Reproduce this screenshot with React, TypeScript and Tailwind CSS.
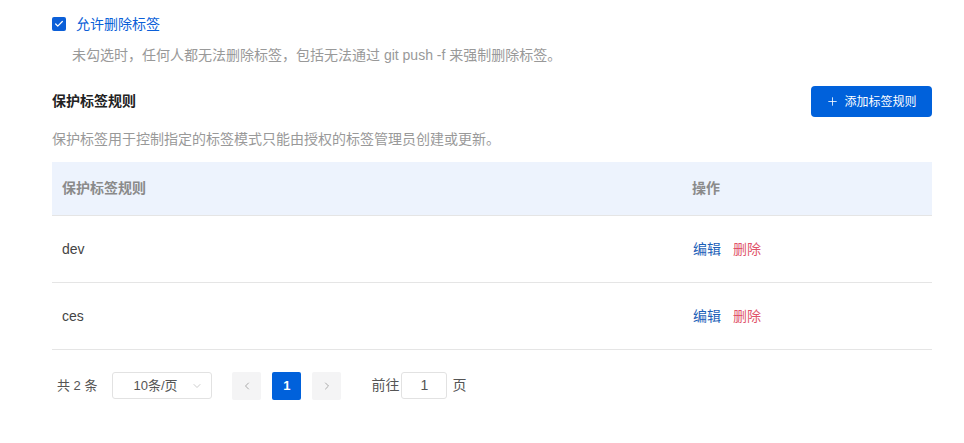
import { Check, ChevronDown, ChevronLeft, ChevronRight, Plus } from "lucide-react";

const rules = ["dev", "ces"];

export default function App() {
  return (
    <div
      className="min-h-screen bg-white pl-[52px] pr-[32px] pt-[17px] text-[14px] text-[#333]"
      style={{ fontFamily: '"Liberation Sans", Arial, "Noto Sans CJK SC", sans-serif' }}
    >
      <label className="flex items-center gap-[10px] h-[14px]">
        <span className="flex h-[14px] w-[14px] items-center justify-center rounded-[2px] bg-[#0b5fd8]">
          <Check className="h-[10px] w-[10px] text-white" strokeWidth={3} />
        </span>
        <span className="text-[14px] text-[#0b5fd8] leading-none">允许删除标签</span>
      </label>
      <p className="mt-[14px] pl-[20px] text-[14px] leading-[20px] text-[#999]">
        未勾选时，任何人都无法删除标签，包括无法通过 git push -f 来强制删除标签。
      </p>

      <div className="mt-[21px] flex items-center justify-between">
        <h2 className="text-[14px] font-bold text-[#222]">保护标签规则</h2>
        <button className="flex h-[31px] w-[121px] items-center justify-center gap-[5px] rounded-[4px] bg-[#0061db] text-[12px] text-white">
          <Plus className="h-[13px] w-[13px]" strokeWidth={1.5} />
          添加标签规则
        </button>
      </div>
      <p className="mt-[12px] text-[14px] leading-[20px] text-[#999]">
        保护标签用于控制指定的标签模式只能由授权的标签管理员创建或更新。
      </p>

      <table className="mt-[13px] w-full border-collapse">
        <thead>
          <tr className="h-[53px] border-b border-[#e5e5e5] bg-[#edf3fd] text-left">
            <th className="pl-[10px] font-bold text-[14px] text-[#8a8a8a]">保护标签规则</th>
            <th className="w-[240px] font-bold text-[14px] text-[#8a8a8a]">操作</th>
          </tr>
        </thead>
        <tbody>
          {rules.map((r) => (
            <tr key={r} className="h-[67px] border-b border-[#e5e5e5]">
              <td className="pl-[10px] pt-[2px] text-[14px] text-[#444]">{r}</td>
              <td className="pt-[2px] text-[14px]">
                <span className="ml-[1px] text-[#1d5fb8]">编辑</span>
                <span className="ml-[12px] text-[#e0536b]">删除</span>
              </td>
            </tr>
          ))}
        </tbody>
      </table>

      <div className="mt-[22px] flex items-center pl-[5px] text-[13px] text-[#555]">
        <span>共 2 条</span>
        <div className="ml-[15px] flex h-[27px] w-[100px] items-center justify-between rounded-[3px] border border-[#e2e2e2] pl-[20px] pr-[8px]">
          <span className="text-[#555]">10条/页</span>
          <ChevronDown className="h-[12px] w-[12px] text-[#bbb]" strokeWidth={1.5} />
        </div>
        <div className="ml-[20px] flex items-center gap-[11px]">
          <span className="flex h-[28px] w-[29px] items-center justify-center rounded-[2px] bg-[#f4f4f5]">
            <ChevronLeft className="h-[12px] w-[12px] text-[#aaa]" strokeWidth={2} />
          </span>
          <span className="flex h-[28px] w-[29px] items-center justify-center rounded-[2px] bg-[#0061db] text-[13px] font-bold text-white">
            1
          </span>
          <span className="flex h-[28px] w-[29px] items-center justify-center rounded-[2px] bg-[#f4f4f5]">
            <ChevronRight className="h-[12px] w-[12px] text-[#aaa]" strokeWidth={2} />
          </span>
        </div>
        <span className="ml-[30px] text-[14px]">前往</span>
        <div className="ml-[2px] flex h-[27px] w-[46px] items-center justify-center rounded-[3px] border border-[#e2e2e2] text-[14px] text-[#555]">
          1
        </div>
        <span className="ml-[5px] text-[14px]">页</span>
      </div>
    </div>
  );
}
